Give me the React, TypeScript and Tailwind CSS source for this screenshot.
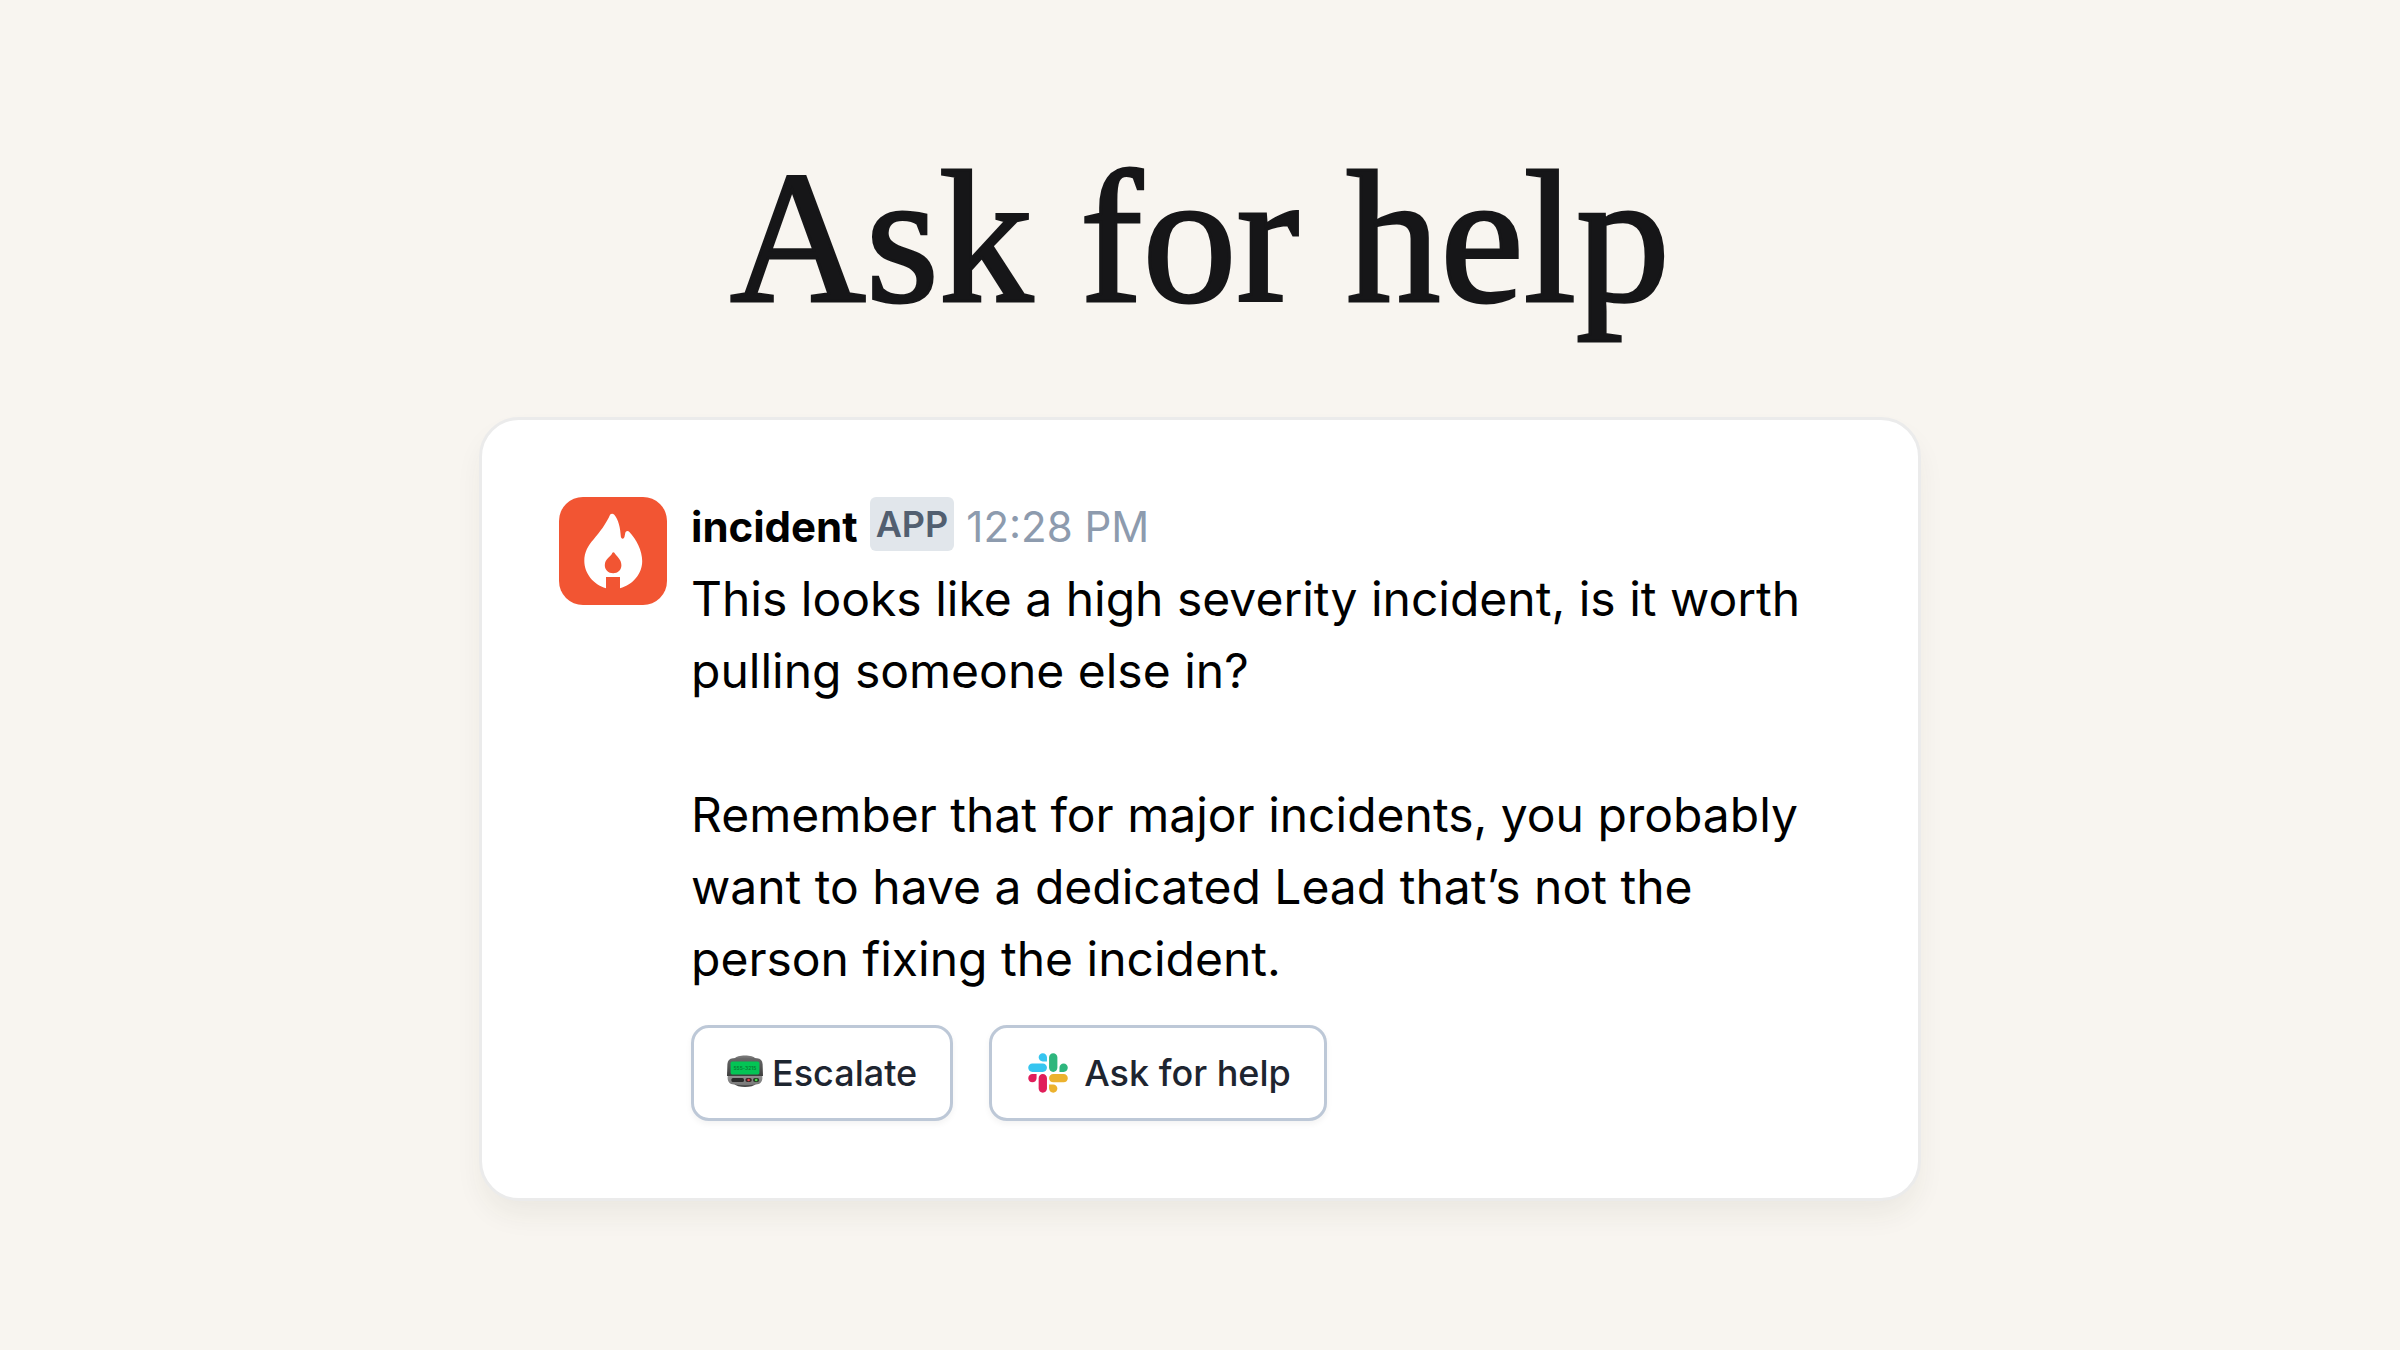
function FlameAvatar() {
  return (
    <svg viewBox="0 0 108 108" className="size-27 shrink-0" role="img" aria-label="incident">
      <rect width="108" height="108" rx="24" fill="#f25533" />
      <path
        fill="#fff"
        d="M51.2 17.6C52.4 16.2 54.2 16.5 55.3 17.8C59.5 22.5 61.3 31 61.8 39.3C62 42.2 64.8 42.6 65.5 39.8L66.2 36.2C66.6 33.8 68.9 33.3 70.4 34.9C77.5 42 83.2 54 83.2 64C83.2 77 74 87.6 61 91.2V80H47V91.2C34.5 87.8 25.3 76.5 25.3 63.8C25.3 55.5 29 48.5 34.5 42.5C41 34.8 46.6 27.8 51.2 17.6Z"
      />
      <path
        fill="#f25533"
        d="M53.4 55.8C53.9 54.9 54.9 54.9 55.4 55.8C57.2 59.2 62.4 62 62.4 68.2C62.4 73 58.8 76.2 54.2 76.2C49.4 76.2 45.8 72.8 45.8 68.2C45.8 61.8 52 59.8 53.4 55.8Z"
      />
    </svg>
  );
}

function PagerIcon() {
  return (
    <svg viewBox="0 0 36 32" className="-mt-1 h-8 w-9 shrink-0" aria-hidden="true">
      <defs>
        <linearGradient id="pager-top" x1="0" y1="0" x2="0" y2="1">
          <stop offset="0" stopColor="#6a6a6a" />
          <stop offset="1" stopColor="#3f3f3f" />
        </linearGradient>
        <linearGradient id="pager-base" x1="0" y1="0" x2="0" y2="1">
          <stop offset="0" stopColor="#9a9a9a" />
          <stop offset="1" stopColor="#777777" />
        </linearGradient>
      </defs>
      <path fill="#777" d="M7 4C9 1.2 13 .4 18 .4S27 1.2 29 4Z" />
      <path fill="#484848" d="M6 28C9 31 13 32 18 32S27 31 30 28Z" />
      <path
        fill="url(#pager-base)"
        d="M1 18H35L35.4 23C35.2 27 33 29.2 29 29.6C22 30.4 14 30.4 7 29.6C3 29.2 .8 27 .6 23Z"
      />
      <path
        fill="url(#pager-top)"
        d="M.4 9C.6 5.4 2.4 3.6 6 3.2C14 2.4 22 2.4 30 3.2C33.6 3.6 35.4 5.4 35.6 9L36 21H0Z"
      />
      <rect x="3.6" y="6.6" width="28.8" height="12.8" rx="1.6" fill="#04c455" />
      <text
        x="18"
        y="14.8"
        textAnchor="middle"
        fontFamily="Inter, sans-serif"
        fontSize="5"
        fill="#08762f"
      >
        555-3215
      </text>
      <rect x="4.4" y="23" width="12.6" height="4" rx="1.6" fill="#2a2a2a" />
      <rect x="18.4" y="23" width="6.4" height="4" rx="2" fill="#3a2525" />
      <rect x="26" y="23" width="6.2" height="4" rx="2" fill="#253a25" />
      <circle cx="21.6" cy="25" r="1.3" fill="#e0444b" />
      <circle cx="29.2" cy="25" r="1.3" fill="#4fd84f" />
    </svg>
  );
}

function SlackIcon() {
  return (
    <svg viewBox="0 0 127 127" className="size-10 shrink-0" aria-hidden="true">
      <path
        fill="#e01e5a"
        d="M27.2 80c0 7.3-5.9 13.2-13.2 13.2C6.7 93.2.8 87.3.8 80c0-7.3 5.9-13.2 13.2-13.2h13.2V80zm6.6 0c0-7.3 5.9-13.2 13.2-13.2 7.3 0 13.2 5.9 13.2 13.2v33c0 7.3-5.9 13.2-13.2 13.2-7.3 0-13.2-5.9-13.2-13.2V80z"
      />
      <path
        fill="#36c5f0"
        d="M47 27c-7.3 0-13.2-5.9-13.2-13.2C33.8 6.5 39.7.6 47 .6c7.3 0 13.2 5.9 13.2 13.2V27H47zm0 6.7c7.3 0 13.2 5.9 13.2 13.2 0 7.3-5.9 13.2-13.2 13.2H13.9C6.6 60.1.7 54.2.7 46.9c0-7.3 5.9-13.2 13.2-13.2H47z"
      />
      <path
        fill="#2eb67d"
        d="M99.9 46.9c0-7.3 5.9-13.2 13.2-13.2 7.3 0 13.2 5.9 13.2 13.2 0 7.3-5.9 13.2-13.2 13.2H99.9V46.9zm-6.6 0c0 7.3-5.9 13.2-13.2 13.2-7.3 0-13.2-5.9-13.2-13.2V13.8C66.9 6.5 72.8.6 80.1.6c7.3 0 13.2 5.9 13.2 13.2v33.1z"
      />
      <path
        fill="#ecb22e"
        d="M80.1 99.8c7.3 0 13.2 5.9 13.2 13.2 0 7.3-5.9 13.2-13.2 13.2-7.3 0-13.2-5.9-13.2-13.2V99.8h13.2zm0-6.6c-7.3 0-13.2-5.9-13.2-13.2 0-7.3 5.9-13.2 13.2-13.2h33.1c7.3 0 13.2 5.9 13.2 13.2 0 7.3-5.9 13.2-13.2 13.2H80.1z"
      />
    </svg>
  );
}

const buttonClass =
  "flex h-24 items-center rounded-[18px] border-3 border-[#bdc8d7] bg-white text-[36px] leading-[48px] font-medium text-[#1e2530] shadow-[0_3px_6px_rgba(0,0,0,0.05)]";

export default function App() {
  return (
    <main className="flex min-h-screen flex-col items-center bg-[#f8f5f0] px-12 pt-32 pb-12 font-['Inter',sans-serif]">
      <h1 className="text-center font-['Liberation_Serif',serif] text-[188px] leading-[220px] text-[#161618] [-webkit-text-stroke:3px_#161618]">
        Ask for help
      </h1>

      <article className="mt-[69px] flex w-full max-w-[1442px] gap-6 rounded-[40px] border-3 border-[#ebebeb] bg-white p-[77px] shadow-[0_16px_30px_-4px_rgba(60,50,30,0.07)]">
        <FlameAvatar />
        <div className="min-w-0 flex-1">
          <header className="flex h-[66px] items-start gap-3">
            <span className="text-[42px] leading-[60px] font-bold text-black">incident</span>
            <span className="rounded-md bg-[#e1e6eb] px-[6px] text-[36px] leading-[54px] font-semibold text-[#525f70]">
              APP
            </span>
            <time className="text-[42px] leading-[60px] text-[#8d9bae]">12:28 PM</time>
          </header>

          <div className="space-y-[72px] text-[48px] leading-[72px] text-black">
            <p>
              This looks like a high severity incident, is it worth
              <br />
              pulling someone else in?
            </p>
            <p>
              Remember that for major incidents, you probably
              <br />
              want to have a dedicated Lead that’s not the
              <br />
              person fixing the incident.
            </p>
          </div>

          <div className="mt-[30px] flex gap-9">
            <button type="button" className={buttonClass + " gap-[9px] px-[33px]"}>
              <PagerIcon />
              Escalate
            </button>
            <button type="button" className={buttonClass + " gap-4 pr-[33px] pl-[36px]"}>
              <SlackIcon />
              Ask for help
            </button>
          </div>
        </div>
      </article>
    </main>
  );
}
